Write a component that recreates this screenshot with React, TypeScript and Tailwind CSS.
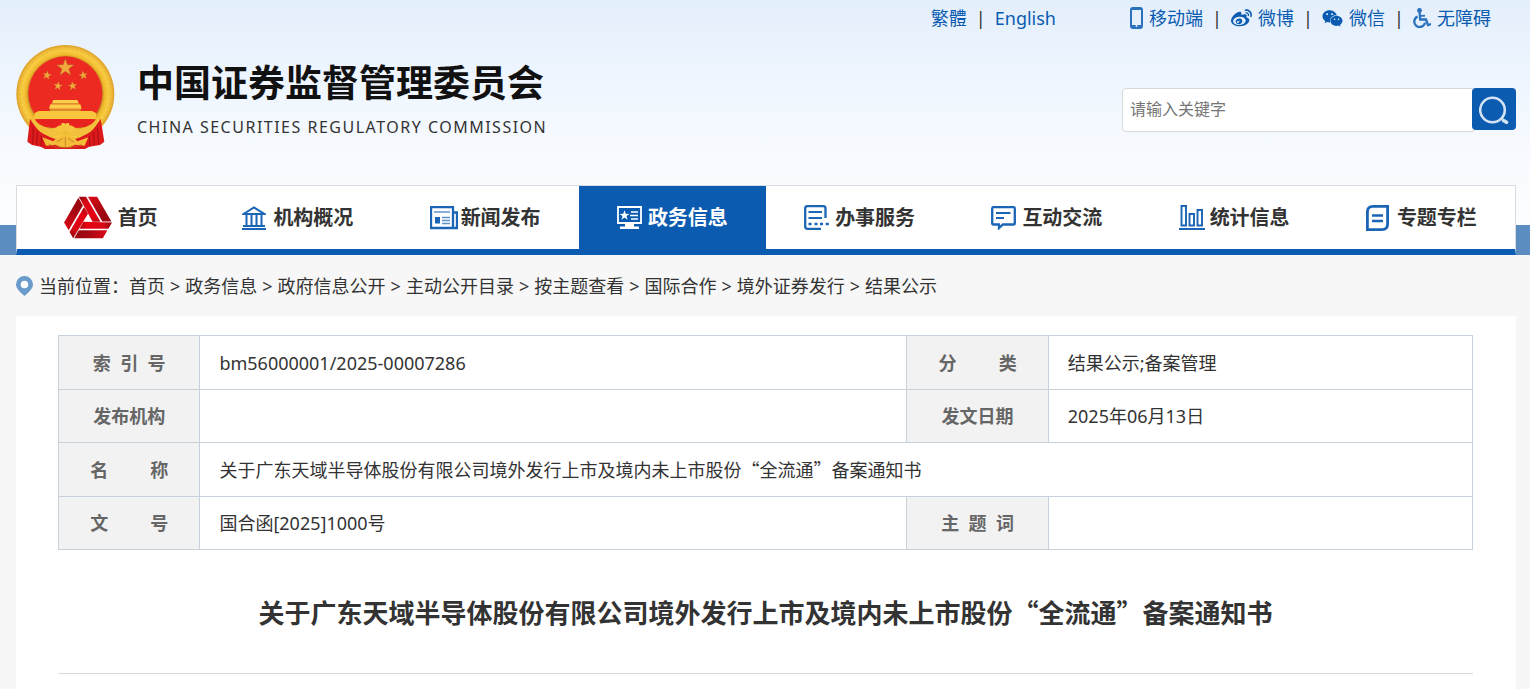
import React from "react";
import { FaWeibo, FaWeixin } from "react-icons/fa";

const STAR = "M0,-10 L2.4,-3.2 L9.5,-3.1 L3.8,1.2 L5.9,8.1 L0,4 L-5.9,8.1 L-3.8,1.2 L-9.5,-3.1 L-2.4,-3.2 Z";

const Emblem = () => (
  <svg viewBox="48 45 297 312" className="h-[104px] w-[99px] shrink-0" aria-hidden="true">
    <defs>
      <radialGradient id="gold" cx="0.5" cy="0.5" r="0.5">
        <stop offset="0.72" stopColor="#a8641b" />
        <stop offset="0.8" stopColor="#f0b92c" />
        <stop offset="0.9" stopColor="#f9cf45" />
        <stop offset="1" stopColor="#dd9f28" />
      </radialGradient>
    </defs>
    <circle cx="196" cy="192" r="147" fill="url(#gold)" />
    <circle cx="196" cy="192" r="134" fill="none" stroke="#ecb535" strokeWidth="3" strokeDasharray="7 6" />
    <circle cx="196" cy="190" r="111" fill="#ec2a22" />
    {/* drapes */}
    <path d="M90,266 C120,315 160,330 196,330 C232,330 272,315 302,266 L313,335 L300,345 L268,350 L255,357 L135,357 L122,350 L96,345 L82,335 Z" fill="#dc1a1c" />
    <path d="M100,292 L98,342 M112,306 L110,346 M124,318 L123,349 M292,292 L296,342 M280,306 L283,346 M268,318 L270,349" stroke="#a90f15" strokeWidth="3" />
    <path d="M92,262 C112,322 165,330 196,306 C227,330 280,322 300,262 L286,268 C265,300 232,302 214,286 L178,286 C160,302 127,300 106,268 Z" fill="#f3c03b" />
    <path d="M104,268 H288 C273,291 240,300 218,286 H174 C152,300 119,291 104,268 Z" fill="#e8231f" />
    {/* gate */}
    <path d="M103,250 L116,243 H276 L289,250 V267 H103 Z" fill="#f8c63c" />
    <path d="M151,223 H241 L245,236 H147 Z M160,210 H232 L237,221 H155 Z" fill="#fbce49" />
    <path d="M150,237 H242 V243 H150 Z" fill="#d88f2b" />
    <path d="M155,221 H237" stroke="#c77a22" strokeWidth="2" />
    {/* gear and ribbon */}
    <path d="M168,300 L174,288 L183,289 L185,279 H193 L196,283 L199,279 H207 L209,289 L218,288 L224,300 L213,309 C204,299 188,299 179,309 Z" fill="#f6c540" />
    <path d="M127,322 L160,334 C172,318 184,319 196,318 C208,319 220,318 232,334 L265,322 L254,347 L226,344 C208,354 184,354 166,344 L138,347 Z" fill="#f3bd39" />
    <path d="M170,336 L188,325 M222,336 L204,325 M196,322 V350" stroke="#c98526" strokeWidth="3" />
    <path d="M146,342 C170,357 222,357 246,342" stroke="#b8741f" strokeWidth="2" fill="none" />
    {/* stars */}
    <g fill="#f0a93a" stroke="#b4682a" strokeWidth="0.5">
      <path d={STAR} transform="translate(196 113) scale(2.7)" />
      <path d={STAR} transform="translate(141 136) rotate(10) scale(1.4)" />
      <path d={STAR} transform="translate(250 136) rotate(-10) scale(1.4)" />
      <path d={STAR} transform="translate(174 168) rotate(8) scale(1.4)" />
      <path d={STAR} transform="translate(218 168) rotate(-8) scale(1.4)" />
    </g>
  </svg>
);

const CsrcMark = () => (
  <svg viewBox="-73 -69 146 128" className="h-[43px] w-12" aria-hidden="true">
    <defs>
      <linearGradient id="outerBand" x1="0" x2="1" y1="0" y2="0">
        <stop offset="0.3" stopColor="#9c0710" />
        <stop offset="1" stopColor="#d90a17" />
      </linearGradient>
      <linearGradient id="innerBand" x1="0" x2="1" y1="0" y2="0">
        <stop offset="0" stopColor="#b00812" />
        <stop offset="0.25" stopColor="#e60012" />
        <stop offset="0.75" stopColor="#d80a16" />
        <stop offset="1" stopColor="#8c050b" />
      </linearGradient>
    </defs>
    {[0, 120, 240].map((deg) => (
      <g key={deg} transform={`rotate(${deg})`}>
        <path d="M-42,58 L45,58 L59,34 L-28,34 Z" fill="url(#outerBand)" />
        <path d="M73,10 L62,29 L-26,29 L-14,8 Z" fill="url(#innerBand)" />
      </g>
    ))}
  </svg>
);

const lineIcon = {
  fill: "none",
  stroke: "currentColor",
  strokeWidth: 2,
  "aria-hidden": true,
} as const;

const BankIcon = () => (
  <svg {...lineIcon} width="24" height="24" viewBox="0 0 24 24">
    <path d="M1.5,8 L12,1.5 L22.5,8 Z M4.5,8 V20 M9.5,8 V20 M14.5,8 V20 M19.5,8 V20 M1,20 H23 M0,23 H24" strokeWidth="2" />
  </svg>
);

const NewsIcon = () => (
  <svg {...lineIcon} width="28" height="24" viewBox="0 0 28 24">
    <path d="M1,1 H23 V22 H1 Z M23,6.5 H27 V22 H23" strokeWidth="2.3" />
    <path d="M4,6 H20 M12,11.5 H20 M12,14.5 H20 M12,17.5 H20" strokeWidth="1.7" opacity="0.7" />
    <path d="M5,11 H10 V17.5 H5 Z" fill="currentColor" stroke="none" />
  </svg>
);

const ScreenIcon = () => (
  <svg {...lineIcon} width="25" height="24" viewBox="0 0 25 24">
    <path d="M1,1 H24 V17 H1 Z" strokeWidth="1.8" />
    <path d={STAR} transform="translate(7.5 9.5) scale(0.52)" fill="currentColor" stroke="none" />
    <path d="M14,6 H21 M13,9.5 H21 M14,13 H21" strokeWidth="1.5" />
    <path d="M8,18 H17 V20.5 H22 V23 H3 V20.5 H8 Z" fill="currentColor" stroke="none" />
  </svg>
);

const FormIcon = () => (
  <svg {...lineIcon} width="25" height="25" viewBox="0 0 25 25">
    <path d="M21.5,13 V3.5 Q21.5,1.2 19,1.2 H3.5 Q1.2,1.2 1.2,3.5 V21.5 Q1.2,23.8 3.5,23.8 H17" strokeWidth="2.3" />
    <path d="M4.5,7 H18 M4.5,13 H18" strokeWidth="2" />
    <path d="M4.5,19 H7.5 M10.5,19 H13.5 M16,19 H19 M21.8,19 H24.8" strokeWidth="2.6" />
  </svg>
);

const ChatIcon = () => (
  <svg {...lineIcon} width="25" height="24" viewBox="0 0 25 24">
    <path d="M2.5,1.2 H22.5 Q23.8,1.2 23.8,2.5 V17 Q23.8,18.5 22.5,18.5 H12 L8,22 V18.5 H2.5 Q1.2,18.5 1.2,17 V2.5 Q1.2,1.2 2.5,1.2 Z" strokeWidth="2.3" />
    <path d="M5,7 H19.5 M5,12 H13" strokeWidth="2" />
  </svg>
);

const ChartIcon = () => (
  <svg {...lineIcon} width="26" height="25" viewBox="0 0 26 25">
    <path d="M2.5,1 H7 V20.5 H2.5 Z M10.5,9 H15 V20.5 H10.5 Z M18.5,5 H23 V20.5 H18.5 Z" strokeWidth="1.9" />
    <path d="M0,24 H26" />
  </svg>
);

const TopicIcon = () => (
  <svg {...lineIcon} width="23" height="26" viewBox="0 0 23 26">
    <path d="M7,1.4 H21.6 V19 Q21.6,24.6 16,24.6 H1.4 V7 Q1.4,1.4 7,1.4 Z" strokeWidth="2.8" />
    <path d="M6,10.5 H17 M6,16 H17" strokeWidth="2.5" />
  </svg>
);

const PhoneIcon = () => (
  <svg width="13" height="22" viewBox="0 0 13 22" aria-hidden="true">
    <rect x="1" y="1" width="11" height="20" rx="2" fill="none" stroke="#2a72bd" strokeWidth="2" />
    <path d="M2,1.5 H11 V3 H2 Z M2,18 H11 V20.5 H2 Z" fill="#2a72bd" />
    <circle cx="6.5" cy="19" r="1" fill="#e6f1fc" />
  </svg>
);

const WheelchairIcon = () => (
  <svg width="18" height="20" viewBox="0 0 18 20" fill="none" stroke="#2a72bd" strokeWidth="2.3" aria-hidden="true">
    <circle cx="6.5" cy="2.4" r="2.4" fill="#2a72bd" stroke="none" />
    <path d="M6.5,4 L7.2,11.5 H13 L15,17 L18,16" />
    <path d="M7,7.8 H12" strokeWidth="1.8" />
    <path d="M4.6,8.6 A5.4,5.4 0 1 0 12,14.6" />
  </svg>
);

const PinIcon = () => (
  <svg width="17" height="20" viewBox="0 0 17 20" aria-hidden="true">
    <path d="M8.5,0 A8.5,8.5 0 0 1 17,8.5 C17,13 12,17 8.5,20 C5,17 0,13 0,8.5 A8.5,8.5 0 0 1 8.5,0 Z" fill="#6a9bcb" />
    <circle cx="8.5" cy="8.5" r="3.8" fill="#fff" />
  </svg>
);

const SearchIcon = () => (
  <svg width="30" height="30" viewBox="0 0 30 30" fill="none" stroke="#d3e3f4" aria-hidden="true">
    <circle cx="13.5" cy="16" r="12.3" strokeWidth="2.6" />
    <path d="M24.5,26.5 L27.5,28.3" strokeWidth="3.6" strokeLinecap="round" />
  </svg>
);

const navItems = [
  { label: "机构概况", icon: <BankIcon /> },
  { label: "新闻发布", icon: <NewsIcon /> },
  { label: "政务信息", icon: <ScreenIcon />, active: true },
  { label: "办事服务", icon: <FormIcon /> },
  { label: "互动交流", icon: <ChatIcon /> },
  { label: "统计信息", icon: <ChartIcon /> },
  { label: "专题专栏", icon: <TopicIcon /> },
];

const crumbs = ["首页", "政务信息", "政府信息公开", "主动公开目录", "按主题查看", "国际合作", "境外证券发行", "结果公示"];

const Divider = () => <span className="w-7 text-center text-[#333]">|</span>;

const Th = ({ children }: { children: React.ReactNode }) => (
  <th scope="row" className="border border-[#c6d1db] bg-[#f2f2f2] text-center font-bold whitespace-nowrap text-[#666]">
    {children}
  </th>
);

const Td = ({ children, ...rest }: React.TdHTMLAttributes<HTMLTableCellElement>) => (
  <td className="border border-[#c6d1db] px-[19px] text-[#333]" {...rest}>
    {children}
  </td>
);

const TopLinks = () => (
  <div className="flex h-9 items-center justify-end pr-[39px] text-lg text-[#0b5cb0]">
    <a href="#">繁體</a>
    <Divider />
    <a href="#" className="mr-[74px]">English</a>
    <a href="#" className="flex items-center gap-[6px]">
      <PhoneIcon />
      移动端
    </a>
    <Divider />
    <a href="#" className="flex items-center gap-[6px]">
      <FaWeibo size={21} />
      微博
    </a>
    <Divider />
    <a href="#" className="flex items-center gap-[6px]">
      <FaWeixin size={21} />
      微信
    </a>
    <Divider />
    <a href="#" className="flex items-center gap-[6px]">
      <WheelchairIcon />
      无障碍
    </a>
  </div>
);

const Nav = () => (
  <div className="bg-[linear-gradient(to_top,#5b8dc2_30px,transparent_30px)] pr-[14px] pl-4">
    <nav className="flex h-[70px] border border-b-[6px] border-[#d9dce0] border-b-[#0b5cb0] bg-white text-xl font-bold text-[#333]">
      <a href="#" className="flex flex-1 items-center justify-center gap-[6px]">
        <CsrcMark />
        首页
      </a>
      {navItems.map((item) => (
        <a
          key={item.label}
          href="#"
          className={`flex flex-1 items-center justify-center ${item.active ? "bg-[#0b5cb0] text-white" : ""}`}
        >
          <span className={`w-[31px] ${item.active ? "text-white" : "text-[#1a65b5]"}`}>{item.icon}</span>
          {item.label}
        </a>
      ))}
    </nav>
  </div>
);

export default function App() {
  return (
    <div lang="zh-CN" className="min-h-screen bg-[#f7f7f7] font-['Noto_Sans','Noto_Sans_CJK_SC',sans-serif]">
      <header className="bg-linear-to-b from-[#e4effc] via-[#f6faff] via-55% to-white">
        <TopLinks />
        <div className="flex items-start justify-between pt-[9px] pr-[14px] pb-9 pl-4">
          <a href="#" className="flex items-start gap-[22px]">
            <Emblem />
            <div className="pt-3 text-[#111]">
              <h1 className="text-[37px] leading-[52px] font-bold">中国证券监督管理委员会</h1>
              <p className="text-base leading-9 tracking-[1.5px] text-[#333]">CHINA SECURITIES REGULATORY COMMISSION</p>
            </div>
          </a>
          <form className="flex items-start pt-[43px]" onSubmit={(e) => e.preventDefault()}>
            <input
              type="text"
              aria-label="请输入关键字"
              placeholder="请输入关键字"
              className="h-11 w-[354px] rounded border border-[#d9d9d9] bg-white px-[7px] pb-[2px] text-base placeholder:text-[#757575]"
            />
            <button type="submit" aria-label="搜索" className="-ml-1 flex h-[42px] w-11 items-center justify-center rounded bg-[#0b5cb0]">
              <SearchIcon />
            </button>
          </form>
        </div>
        <Nav />
      </header>

      <div className="flex h-[61px] items-center px-4 text-lg text-[#333]">
        <PinIcon />
        <span className="ml-[6px]">当前位置：</span>
        {crumbs.map((name, index) => (
          <React.Fragment key={name}>
            {index > 0 && <span className="mx-[5px]">&gt;</span>}
            <a href="#">{name}</a>
          </React.Fragment>
        ))}
      </div>

      <main className="mr-[14px] ml-4 bg-white pt-[19px] pr-[43px] pl-[42px]">
        <table className="w-full table-fixed border-collapse text-lg">
          <colgroup>
            <col className="w-[10%]" />
            <col className="w-[50%]" />
            <col className="w-[10%]" />
            <col className="w-[30%]" />
          </colgroup>
          <tbody className="[&>tr]:odd:h-[54px] [&>tr]:even:h-[53px]">
            <tr>
              <Th>索&nbsp;&nbsp;引&nbsp;&nbsp;号</Th>
              <Td>bm56000001/2025-00007286</Td>
              <Th>分{"\u00a0".repeat(9)}类</Th>
              <Td>结果公示;备案管理</Td>
            </tr>
            <tr>
              <Th>发布机构</Th>
              <Td />
              <Th>发文日期</Th>
              <Td>2025年06月13日</Td>
            </tr>
            <tr>
              <Th>名{"\u00a0".repeat(9)}称</Th>
              <Td colSpan={3}>
                <span className="font-['Noto_Sans_CJK_SC',sans-serif]">
                  关于广东天域半导体股份有限公司境外发行上市及境内未上市股份“全流通”备案通知书
                </span>
              </Td>
            </tr>
            <tr>
              <Th>文{"\u00a0".repeat(9)}号</Th>
              <Td>国合函[2025]1000号</Td>
              <Th>主&nbsp;&nbsp;题&nbsp;&nbsp;词</Th>
              <Td />
            </tr>
          </tbody>
        </table>
        <h2 className="border-b border-[#d9d9d9] pt-[41px] pb-10 text-center font-['Noto_Sans_CJK_SC',sans-serif] text-[26px] leading-[42px] font-bold text-[#333]">
          关于广东天域半导体股份有限公司境外发行上市及境内未上市股份“全流通”备案通知书
        </h2>
        <div className="h-4" />
      </main>
    </div>
  );
}
